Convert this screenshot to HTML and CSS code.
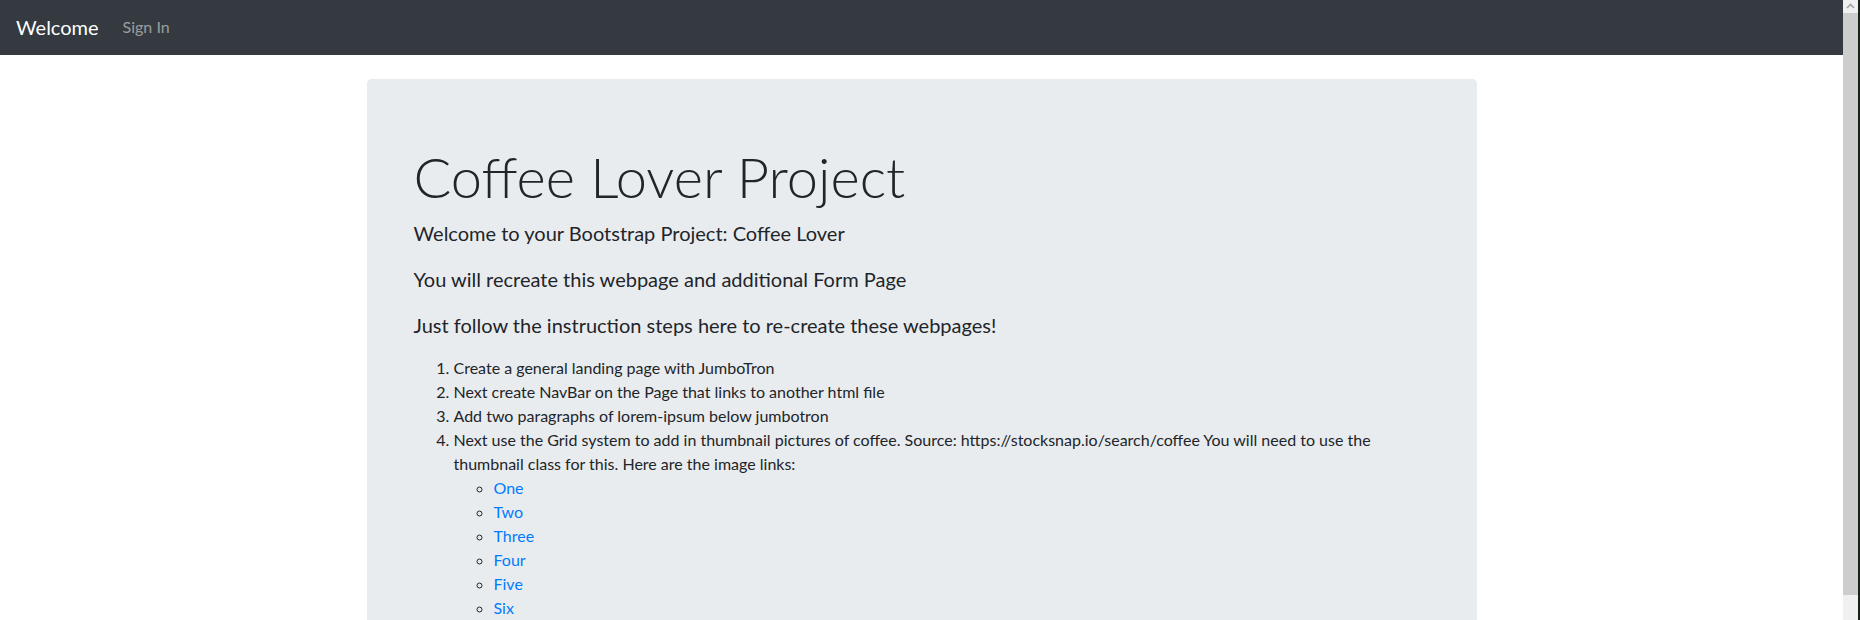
FILE: index.html
```html
<!DOCTYPE html>
<html lang="en">
<head>
<meta charset="utf-8">
<title>Coffee Lover Project</title>
<link rel="stylesheet" href="styles.css">
</head>
<body>
<div class="window">
  <div class="page">
    <nav class="navbar">
      <a class="navbar-brand" href="#">Welcome</a>
      <a class="nav-link" href="#">Sign In</a>
    </nav>
    <div class="container">
      <div class="jumbotron">
        <div class="inner">
          <h1 class="display">Coffee Lover Project</h1>
          <p class="lead">Welcome to your Bootstrap Project: Coffee Lover</p>
          <p class="lead">You will recreate this webpage and additional Form Page</p>
          <p class="lead">Just follow the instruction steps here to re-create these webpages!</p>
          <ol class="steps">
            <li>Create a general landing page with JumboTron</li>
            <li>Next create NavBar on the Page that links to another html file</li>
            <li>Add two paragraphs of lorem-ipsum below jumbotron</li>
            <li>Next use the Grid system to add in thumbnail pictures of coffee. Source: https://stocksnap.io/search/coffee You will need to use the thumbnail class for this. Here are the image links:
              <ul class="links">
                <li><a href="#">One</a></li>
                <li><a href="#">Two</a></li>
                <li><a href="#">Three</a></li>
                <li><a href="#">Four</a></li>
                <li><a href="#">Five</a></li>
                <li><a href="#">Six</a></li>
              </ul>
            </li>
          </ol>
        </div>
      </div>
    </div>
  </div>
  <div class="scrollbar">
    <div class="sb-button">
      <svg width="15" height="13" viewBox="0 0 15 13"><polyline points="4,8 7.5,4.5 11,8" fill="none" stroke="#a3a3a3" stroke-width="1.6"/></svg>
    </div>
    <div class="sb-thumb"></div>
    <div class="sb-track"></div>
  </div>
  <div class="frame-edge"></div>
</div>
</body>
</html>
```

FILE: styles.css
```css
*, *::before, *::after {
  box-sizing: border-box;
}

html, body {
  margin: 0;
  padding: 0;
  height: 620px;
  overflow: hidden;
  background: #fff;
}

body {
  font-family: Lato, "Open Sans", sans-serif;
  font-size: 16px;
  line-height: 1.5;
  color: #212529;
}

.window {
  display: flex;
  height: 620px;
}

.page {
  flex: 1;
  min-width: 0;
}

.navbar {
  display: flex;
  align-items: center;
  background: #343a40;
  padding: 7px 16px 8px;
}

.navbar-brand {
  color: #fff;
  font-size: 20px;
  line-height: 30px;
  padding: 4px 0;
  margin-right: 16px;
  text-decoration: none;
}

.nav-link {
  color: rgba(255, 255, 255, 0.5);
  padding: 8px;
  text-decoration: none;
  line-height: 24px;
}

.container {
  max-width: 1140px;
  margin: 0 auto;
  padding: 0 15px;
}

.jumbotron {
  margin-top: 24px;
  background: #e9ecef;
  border-radius: 4.8px;
  padding: 64px 32px;
}

.inner {
  padding: 0 15px;
}

.display {
  font-size: 56px;
  font-weight: 300;
  line-height: 1.2;
  margin: 0 0 8px;
}

.lead {
  font-size: 20px;
  font-weight: 400;
  margin: 0 0 16px;
}

.steps {
  margin: 0 0 16px;
  padding-left: 40px;
}

.links {
  margin: 0;
  padding-left: 40px;
  list-style-type: circle;
}

.links a {
  color: #007bff;
  text-decoration: none;
}

.scrollbar {
  width: 15px;
  display: flex;
  flex-direction: column;
  background: #f0f0f0;
}

.sb-button {
  height: 13px;
  display: flex;
}

.sb-thumb {
  height: 582px;
  background: #cdcdcd;
}

.sb-track {
  flex: 1;
  background: #f0f0f0;
}

.frame-edge {
  width: 2px;
  background: #1b201b;
}
```
